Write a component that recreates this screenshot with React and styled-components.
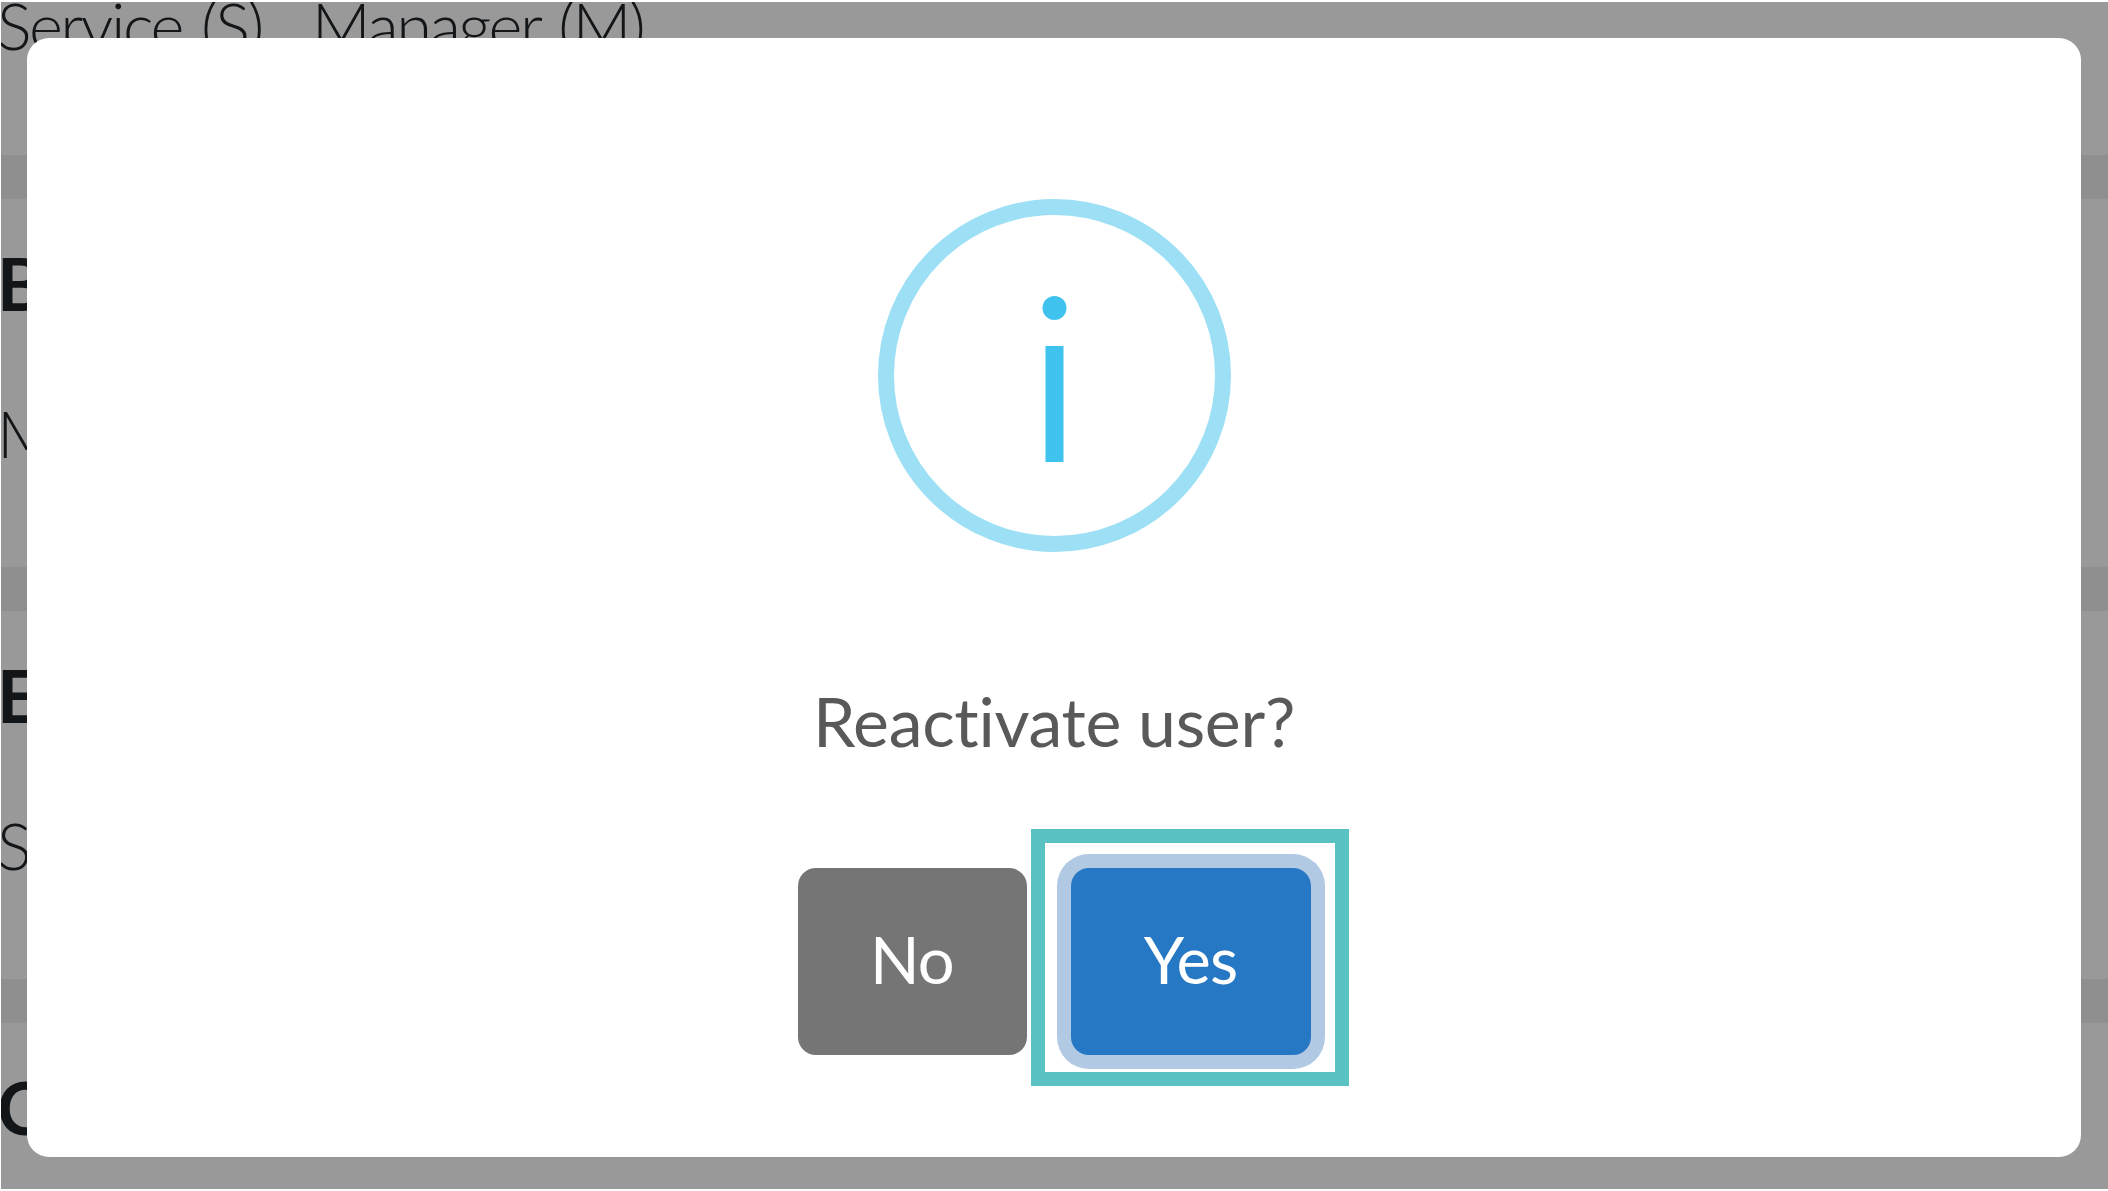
import React from "react";
import styled, { createGlobalStyle } from "styled-components";

const GlobalStyle = createGlobalStyle`
  html, body {
    margin: 0;
    height: 100%;
    background: #fff;
  }
  body {
    font-family: "Lato", "Noto Sans", sans-serif;
    font-variant-ligatures: none;
  }
`;

const Frame = styled.div`
  position: relative;
  height: 1187px;
  margin: 2px 0 2px 1px;
  overflow: hidden;
`;

const Page = styled.main`
  margin: -17px 0 0 -4px;
  color: #212529;
`;

const Value = styled.p`
  margin: 0;
  height: ${(p) => p.$height}px;
  font-size: 65px;
  font-weight: 300;
  letter-spacing: -2.5px;
  word-spacing: 4px;
  line-height: 80px;
  white-space: nowrap;
`;

const Band = styled.div`
  height: 44px;
  margin-left: 4px;
  background: #eeeeee;
`;

const Label = styled.h3`
  margin: 0;
  height: 150px;
  padding-top: 44px;
  font-size: 72px;
  font-weight: 700;
  line-height: 80px;
`;

const Overlay = styled.div`
  position: absolute;
  inset: 0 0 0 -1px;
  display: flex;
  align-items: flex-start;
  justify-content: center;
  padding-top: 36px;
  background: rgba(0, 0, 0, 0.4);
`;

const Dialog = styled.div`
  width: 2054px;
  height: 1119px;
  box-sizing: border-box;
  padding-top: 161px;
  display: flex;
  flex-direction: column;
  align-items: center;
  background: #fff;
  border-radius: 22px;
`;

const InfoIcon = styled.svg`
  display: block;
  width: 353px;
  height: 353px;
  flex-shrink: 0;
`;

const Title = styled.h2`
  margin: 129px 0 0 0;
  font-size: 68px;
  font-weight: 400;
  letter-spacing: -0.3px;
  line-height: 80px;
  color: #595959;
`;

const Actions = styled.div`
  display: flex;
  gap: 44px;
  margin-top: 107px;
`;

const Button = styled.button`
  position: relative;
  width: ${(p) => p.$width}px;
  height: 187px;
  padding: 0 0 6px 0;
  border: 0;
  border-radius: 18px;
  font-family: inherit;
  font-size: 65px;
  font-weight: 400;
  letter-spacing: -0.8px;
  color: #fff;
  background: ${(p) => (p.$primary ? "#2778c4" : "#757575")};
  box-shadow: ${(p) => (p.$primary ? "0 0 0 14px #b2c9e3" : "none")};
`;

const Highlight = styled.span`
  position: absolute;
  inset: -39px -38px -31px -40px;
  border: 14px solid #5bc2c4;
  pointer-events: none;
`;

export default function App() {
  return (
    <>
      <GlobalStyle />
      <Frame>
        <Page>
          <Value $height={170}>Service (S) , Manager (M)</Value>
          <Band />
          <Label>B</Label>
          <Value $height={174}>M</Value>
          <Band />
          <Label>E</Label>
          <Value $height={174}>S</Value>
          <Band />
          <Label>C</Label>
        </Page>
        <Overlay>
          <Dialog>
            <InfoIcon viewBox="0 0 353 353">
              <circle cx="176.5" cy="176.5" r="168.5" fill="none" stroke="#9de0f6" strokeWidth="16" />
              <circle cx="176.5" cy="109" r="12" fill="#3fc3ee" />
              <rect x="167.5" y="147" width="18" height="116" fill="#3fc3ee" />
            </InfoIcon>
            <Title>Reactivate user?</Title>
            <Actions>
              <Button $width={229}>No</Button>
              <Button $width={240} $primary>
                Yes
                <Highlight />
              </Button>
            </Actions>
          </Dialog>
        </Overlay>
      </Frame>
    </>
  );
}
